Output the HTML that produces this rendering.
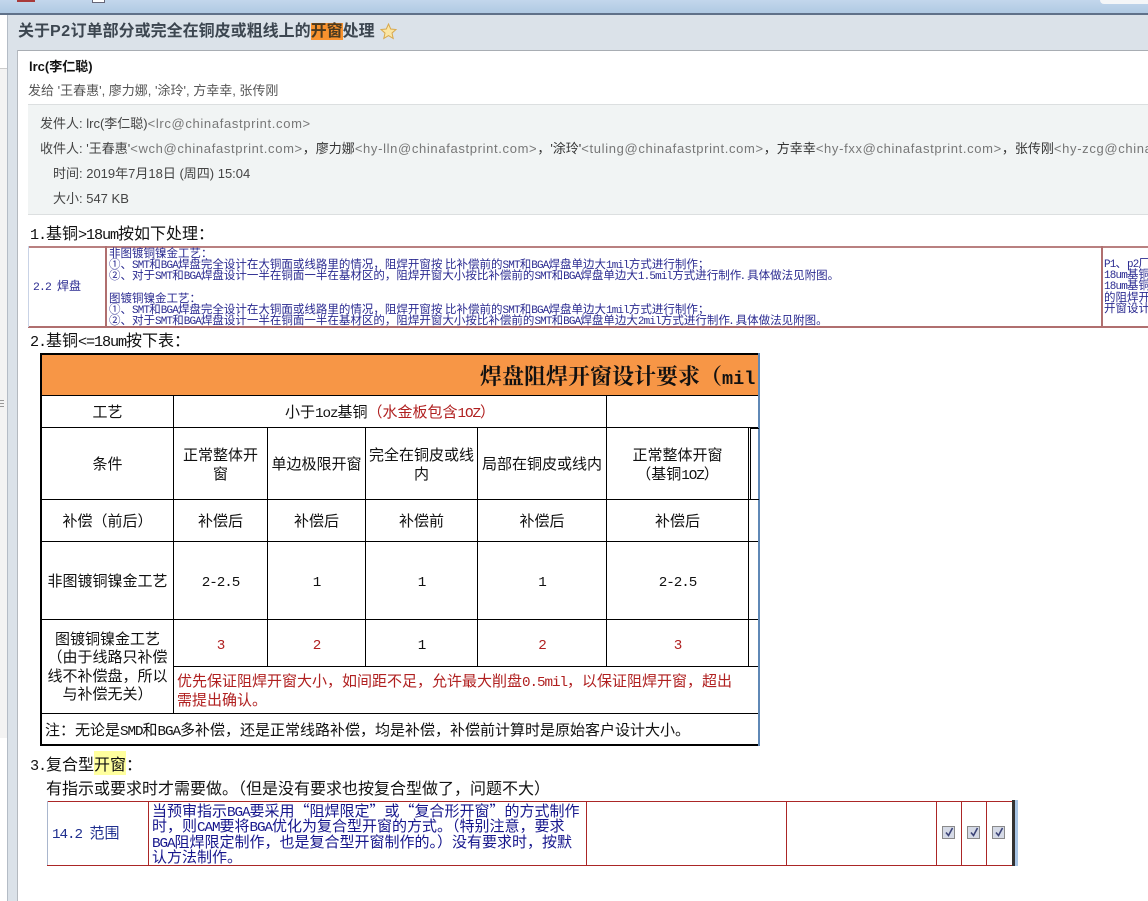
<!DOCTYPE html>
<html><head><meta charset="utf-8"><style>
html,body{margin:0;padding:0;background:#fff}
#p{position:relative;width:1148px;height:901px;overflow:hidden;background:#fff;font-family:"Liberation Sans","Noto Sans CJK SC",sans-serif}
#p div{position:absolute;white-space:nowrap}
.b{background:#000}
.r{background:#ab2626}
.t{font-family:"WenQuanYi Zen Hei","Noto Sans CJK SC",sans-serif;color:#111}
i{font-style:normal;font-family:"Liberation Mono",monospace;font-size:.95em;letter-spacing:-.074em;line-height:0}
.c{font-family:"WenQuanYi Zen Hei","Noto Sans CJK SC",sans-serif;color:#111;font-size:15px;line-height:19px;text-align:center;display:flex;align-items:center;justify-content:center;white-space:normal!important}
.red{color:#b02020}
.m{font-family:"WenQuanYi Zen Hei","Noto Sans CJK SC",sans-serif;color:#2a2a90;font-size:11.5px;line-height:11.2px}
.h{color:#444;font-size:13px;line-height:18px}
.e{color:#777;letter-spacing:.65px}
.cb{width:11px;height:11px;border:1px solid #8a8a8a;background:#d5dae6}
.cb svg{position:absolute;left:1px;top:0}
</style></head><body><div id="p">

<div style="left:0;top:0;width:1148px;height:14px;background:linear-gradient(#c3d7ec,#aec8e2)"></div>
<div style="left:0;top:13px;width:1148px;height:2px;background:#5f7189"></div>
<div style="left:17px;top:0;width:18px;height:2px;background:#a83a3a"></div>
<div style="left:92px;top:0;width:11px;height:2px;border:1px solid #667;border-top:0;background:#fff"></div>
<div style="left:1100px;top:0;width:48px;height:4px;background:#f4f6f8;border-radius:0 0 0 6px"></div>

<div style="left:0;top:15px;width:7px;height:723px;background:#f3f3f3"></div>
<div style="left:0;top:15px;width:7px;height:53px;background:#fff;border-bottom:1px solid #ccc"></div>
<div style="left:0;top:400px;width:4px;height:1px;background:#999"></div>
<div style="left:0;top:403px;width:4px;height:1px;background:#999"></div>
<div style="left:0;top:406px;width:4px;height:1px;background:#999"></div>
<div style="left:7px;top:15px;width:1141px;height:35px;background:#dbe2e9"></div>
<div style="left:7px;top:15px;width:10px;height:886px;background:#dbe2e9;border-left:1px solid #b4bcc6;box-sizing:border-box"></div>
<div style="left:17px;top:50px;width:1131px;height:1px;background:#a8adb3"></div>
<div style="left:17px;top:50px;width:1px;height:851px;background:#b4b9bf"></div>

<div style="left:18px;top:21px;font-size:16px;line-height:22px;color:#3c4650;font-weight:700">关于<span style="letter-spacing:.5px">P2</span>订单部分或完全在铜皮或粗线上的<span style="background:#f8922e;color:#4a3a20">开窗</span>处理</div>
<svg style="position:absolute;left:380px;top:23px" width="17" height="17" viewBox="0 0 17 17"><path d="M8.5 1l2.2 5 5.3.5-4 3.6 1.2 5.4-4.7-2.9-4.7 2.9 1.2-5.4-4-3.6 5.3-.5z" fill="#fbe6a4" stroke="#d8a84c" stroke-width="1"/></svg>

<div style="left:29px;top:58px;font-size:13px;line-height:18px;color:#111;font-weight:700">lrc(李仁聪)</div>
<div style="left:28px;top:82px;font-size:13px;line-height:18px;color:#555">发给 '王春惠', 廖力娜, '涂玲', 方幸幸, 张传刚</div>

<div style="left:28px;top:104px;width:1120px;height:111px;background:#f1f4f4;border-top:1px solid #dcdfe0;border-bottom:1px solid #dcdfe0;box-sizing:border-box"></div>
<div class="h" style="left:40px;top:115px">发件人: lrc(李仁聪)<span class="e">&lt;lrc@chinafastprint.com&gt;</span></div>
<div class="h" style="left:40px;top:140px">收件人: '王春惠'<span class="e">&lt;wch@chinafastprint.com&gt;</span><span style="color:#333">，廖力娜</span><span class="e">&lt;hy-lln@chinafastprint.com&gt;</span><span style="color:#333">，'涂玲'</span><span class="e">&lt;tuling@chinafastprint.com&gt;</span><span style="color:#333">，方幸幸</span><span class="e">&lt;hy-fxx@chinafastprint.com&gt;</span><span style="color:#333">，张传刚</span><span class="e">&lt;hy-zcg@chinafastprint.com&gt;</span></div>
<div class="h" style="left:53px;top:165px">时间: 2019年7月18日 (周四) 15:04</div>
<div class="h" style="left:53px;top:190px">大小: 547 KB</div>

<div class="t" style="left:30px;top:223px;font-size:16px;line-height:19px"><i>1.</i>基铜<i>&gt;18um</i>按如下处理：</div>

<div style="left:28px;top:246px;width:1120px;height:2px;background:#b98080"></div>
<div style="left:28px;top:326px;width:1120px;height:2px;background:#b06f6f"></div>
<div style="left:28px;top:246px;width:1px;height:81px;background:#c9d3e6"></div>
<div style="left:105px;top:246px;width:2px;height:81px;background:#b06f6f"></div>
<div style="left:1101px;top:246px;width:2px;height:81px;background:#b06f6f"></div>
<div class="m" style="left:33px;top:280px;font-size:12px;line-height:12px"><i>2.2 </i>焊盘</div>
<div class="m" style="left:109px;top:248px">非图镀铜镍金工艺：<br>①、<i>SMT</i>和<i>BGA</i>焊盘完全设计在大铜面或线路里的情况，阻焊开窗按 比补偿前的<i>SMT</i>和<i>BGA</i>焊盘单边大<i>1mil</i>方式进行制作；<br>②、对于<i>SMT</i>和<i>BGA</i>焊盘设计一半在铜面一半在基材区的，阻焊开窗大小按比补偿前的<i>SMT</i>和<i>BGA</i>焊盘单边大<i>1.5mil</i>方式进行制作. 具体做法见附图。<br><br>图镀铜镍金工艺：<br>①、<i>SMT</i>和<i>BGA</i>焊盘完全设计在大铜面或线路里的情况，阻焊开窗按 比补偿前的<i>SMT</i>和<i>BGA</i>焊盘单边大<i>1mil</i>方式进行制作；<br>②、对于<i>SMT</i>和<i>BGA</i>焊盘设计一半在铜面一半在基材区的，阻焊开窗大小按比补偿前的<i>SMT</i>和<i>BGA</i>焊盘单边大<i>2mil</i>方式进行制作. 具体做法见附图。</div>
<div class="m" style="left:1104px;top:258px;width:44px;overflow:hidden"><i>P1</i>、<i>p2</i>厂<br><i>18um</i>基铜<br><i>18um</i>基铜<br>的阻焊开<br>开窗设计</div>

<div class="t" style="left:30px;top:330px;font-size:16px;line-height:19px"><i>2.</i>基铜<i>&lt;=18um</i>按下表：</div>

<!-- main table -->
<div style="left:42px;top:355px;width:716px;height:40px;background:#f79646"></div>
<div class="t" style="left:42px;top:355px;width:715px;height:40px;overflow:hidden;text-align:right;font-size:22px;line-height:42px;color:#111;font-weight:700;font-family:'Noto Serif CJK SC',serif"><span style="display:inline-block;width:277px;text-align:left;white-space:nowrap">焊盘阻焊开窗设计要求（<span style="font-family:'Liberation Mono',monospace;font-size:18.5px">mil</span></span></div>

<div class="b" style="left:40px;top:353px;width:719px;height:2px"></div>
<div class="b" style="left:40px;top:353px;width:2px;height:393px"></div>
<div class="b" style="left:40px;top:744px;width:719px;height:2px"></div>
<div style="left:758px;top:353px;width:2px;height:393px;background:#5f88b6"></div>

<div class="b" style="left:42px;top:395px;width:716px;height:1px"></div>
<div class="b" style="left:42px;top:427px;width:716px;height:1px"></div>
<div class="b" style="left:42px;top:499px;width:716px;height:1px"></div>
<div class="b" style="left:42px;top:541px;width:716px;height:1px"></div>
<div class="b" style="left:42px;top:619px;width:716px;height:1px"></div>
<div class="b" style="left:173px;top:666px;width:585px;height:1px"></div>
<div class="b" style="left:42px;top:713px;width:716px;height:1px"></div>

<div class="b" style="left:173px;top:395px;width:1px;height:318px"></div>
<div class="b" style="left:267px;top:427px;width:1px;height:239px"></div>
<div class="b" style="left:365px;top:427px;width:1px;height:239px"></div>
<div class="b" style="left:477px;top:427px;width:1px;height:239px"></div>
<div class="b" style="left:606px;top:395px;width:1px;height:271px"></div>
<div class="b" style="left:748px;top:427px;width:1px;height:239px"></div>
<div style="left:750px;top:428px;width:8px;height:70px;border:1px solid #000;border-right:0;box-sizing:content-box"></div>

<div class="c" style="left:42px;top:396px;width:131px;height:31px">工艺</div>
<div class="c" style="left:174px;top:396px;width:432px;height:31px"><span>小于<i>1oz</i>基铜<span class="red">（水金板包含<i>1OZ</i>）</span></span></div>
<div class="c" style="left:42px;top:428px;width:131px;height:71px">条件</div>
<div class="c" style="left:178px;top:428px;width:85px;height:71px">正常整体开窗</div>
<div class="c" style="left:268px;top:428px;width:97px;height:71px">单边极限开窗</div>
<div class="c" style="left:366px;top:428px;width:111px;height:71px">完全在铜皮或线内</div>
<div class="c" style="left:478px;top:428px;width:128px;height:71px">局部在铜皮或线内</div>
<div class="c" style="left:607px;top:428px;width:141px;height:71px"><span>正常整体开窗<br>（基铜<i>1OZ</i>）</span></div>

<div class="c" style="left:42px;top:500px;width:131px;height:41px">补偿（前后）</div>
<div class="c" style="left:174px;top:500px;width:93px;height:41px">补偿后</div>
<div class="c" style="left:268px;top:500px;width:97px;height:41px">补偿后</div>
<div class="c" style="left:366px;top:500px;width:111px;height:41px">补偿前</div>
<div class="c" style="left:478px;top:500px;width:128px;height:41px">补偿后</div>
<div class="c" style="left:607px;top:500px;width:141px;height:41px">补偿后</div>

<div class="c" style="left:42px;top:542px;width:131px;height:77px">非图镀铜镍金工艺</div>
<div class="c" style="left:174px;top:542px;width:93px;height:77px"><span><i>2-2.5</i></span></div>
<div class="c" style="left:268px;top:542px;width:97px;height:77px"><span><i>1</i></span></div>
<div class="c" style="left:366px;top:542px;width:111px;height:77px"><span><i>1</i></span></div>
<div class="c" style="left:478px;top:542px;width:128px;height:77px"><span><i>1</i></span></div>
<div class="c" style="left:607px;top:542px;width:141px;height:77px"><span><i>2-2.5</i></span></div>

<div class="c" style="left:44px;top:620px;width:127px;height:93px;line-height:18.5px"><span>图镀铜镍金工艺<br>（由于线路只补偿<br>线不补偿盘，所以<br>与补偿无关）</span></div>
<div class="c" style="left:174px;top:620px;width:93px;height:46px;color:#b02020"><span><i>3</i></span></div>
<div class="c" style="left:268px;top:620px;width:97px;height:46px;color:#b02020"><span><i>2</i></span></div>
<div class="c" style="left:366px;top:620px;width:111px;height:46px"><span><i>1</i></span></div>
<div class="c" style="left:478px;top:620px;width:128px;height:46px;color:#b02020"><span><i>2</i></span></div>
<div class="c" style="left:607px;top:620px;width:141px;height:46px;color:#b02020"><span><i>3</i></span></div>

<div class="t" style="left:177px;top:671px;font-size:15px;line-height:19px;color:#b02020">优先保证阻焊开窗大小，如间距不足，允许最大削盘<i>0.5mil</i>，以保证阻焊开窗，超出<br>需提出确认。</div>
<div class="t" style="left:45px;top:720px;font-size:15px;line-height:19px">注：无论是<i>SMD</i>和<i>BGA</i>多补偿，还是正常线路补偿，均是补偿，补偿前计算时是原始客户设计大小。</div>

<div class="t" style="left:30px;top:754px;font-size:16px;line-height:19px"><i>3.</i>复合型<span style="background:#ffff9e">开窗</span>：</div>
<div class="t" style="left:46px;top:778px;font-size:16px;line-height:19px">有指示或要求时才需要做。（但是没有要求也按复合型做了，问题不大）</div>

<!-- bottom table -->
<div class="r" style="left:47px;top:801px;width:966px;height:1px"></div>
<div class="r" style="left:47px;top:865px;width:966px;height:1px"></div>
<div style="left:47px;top:801px;width:1px;height:64px;background:#a9b6cd"></div>
<div class="r" style="left:148px;top:801px;width:1px;height:65px"></div>
<div class="r" style="left:586px;top:801px;width:1px;height:65px"></div>
<div class="r" style="left:786px;top:801px;width:1px;height:65px"></div>
<div class="r" style="left:936px;top:801px;width:1px;height:65px"></div>
<div class="r" style="left:961px;top:801px;width:1px;height:65px"></div>
<div class="r" style="left:986px;top:801px;width:1px;height:65px"></div>
<div style="left:1012px;top:800px;width:3px;height:66px;background:#333"></div>
<div style="left:1015px;top:800px;width:3px;height:66px;background:#a9c6e6"></div>
<div class="t" style="left:52px;top:824px;font-size:15px;line-height:18px;color:#1f2f8f"><i>14.2 </i>范围</div>
<div class="t" style="left:152px;top:803px;font-size:15px;line-height:15.4px;color:#16168c">当预审指示<i>BGA</i>要采用“阻焊限定”或“复合形开窗”的方式制作<br>时，则<i>CAM</i>要将<i>BGA</i>优化为复合型开窗的方式。（特别注意，要求<br><i>BGA</i>阻焊限定制作，也是复合型开窗制作的。）没有要求时，按默<br>认方法制作。</div>
<div class="cb" style="left:942px;top:826px"><svg width="11" height="11" viewBox="0 0 11 11"><path d="M2 5.5l2.5 3L8.5 1" fill="none" stroke="#3c4478" stroke-width="1.6"/></svg></div>
<div class="cb" style="left:967px;top:826px"><svg width="11" height="11" viewBox="0 0 11 11"><path d="M2 5.5l2.5 3L8.5 1" fill="none" stroke="#3c4478" stroke-width="1.6"/></svg></div>
<div class="cb" style="left:992px;top:826px"><svg width="11" height="11" viewBox="0 0 11 11"><path d="M2 5.5l2.5 3L8.5 1" fill="none" stroke="#3c4478" stroke-width="1.6"/></svg></div>

</div></body></html>
